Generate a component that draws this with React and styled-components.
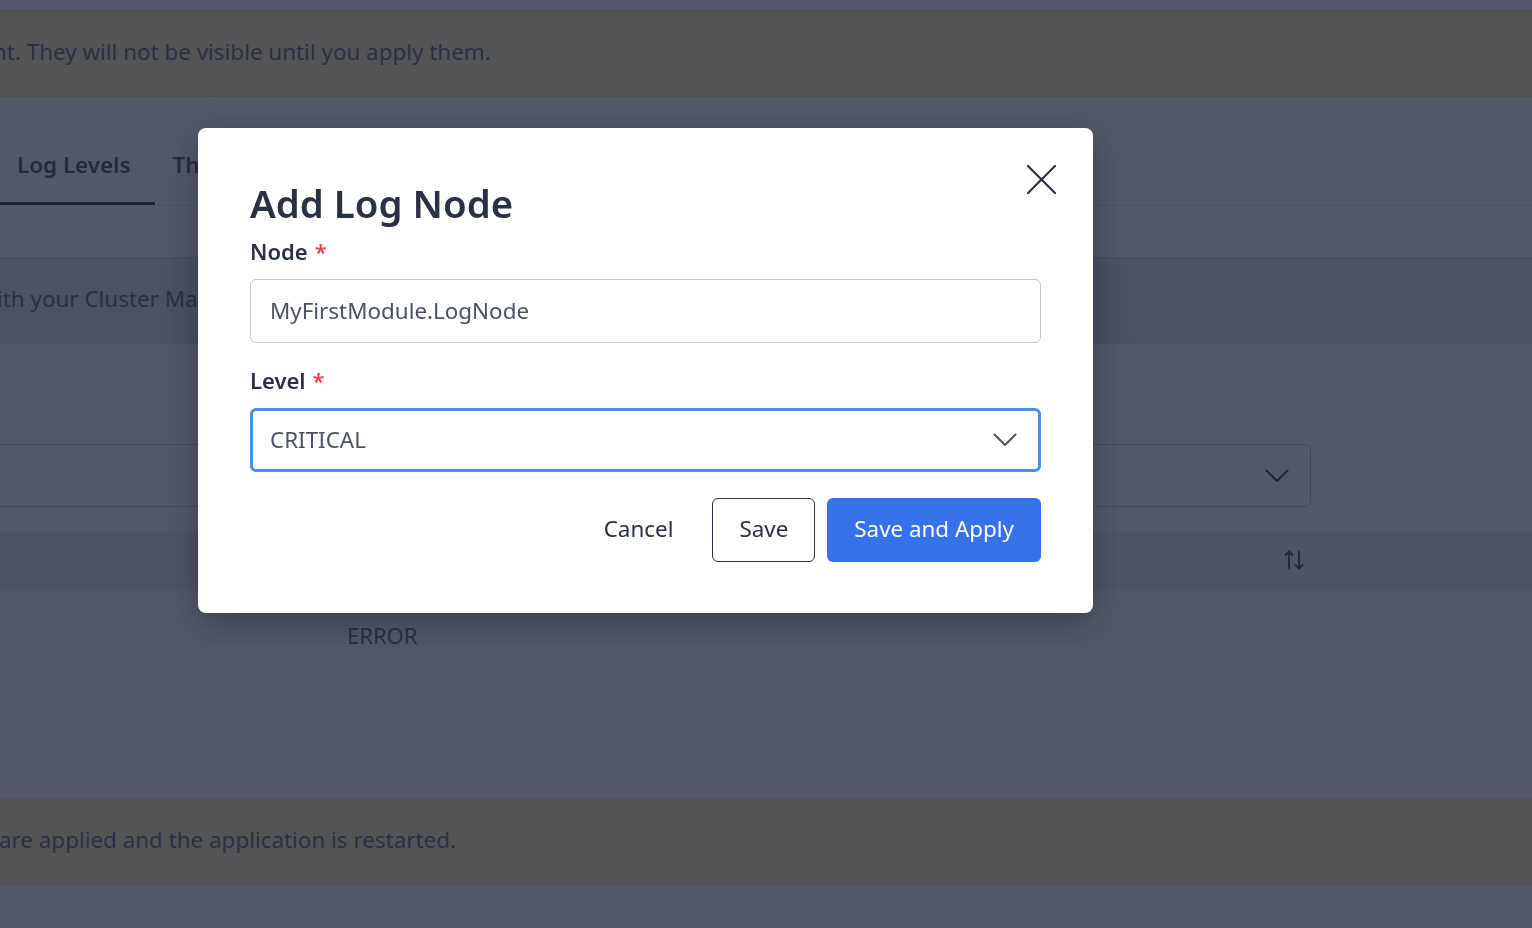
import React from 'react';
import styled, { createGlobalStyle } from 'styled-components';

const GlobalStyle = createGlobalStyle`
  html, body { margin: 0; padding: 0; background: #ffffff; overflow: hidden; }
  body { font-family: "Noto Sans", "Open Sans", sans-serif; }
  *, *::before, *::after { box-sizing: border-box; }
`;

const Page = styled.div`
  width: 1532px;
  height: 928px;
  padding-top: 10px;
  background: #ffffff;
  display: flex;
  flex-direction: column;
  overflow: hidden;
`;

const Banner = styled.div`
  flex: none;
  height: 87px;
  margin-top: ${p => p.$top || 0}px;
  padding-bottom: 5px;
  display: flex;
  align-items: center;
  background: ${p => (p.$tone === 'info' ? '#d0dfed' : '#fae8ae')};
  border-top: 1px solid ${p => (p.$tone === 'info' ? '#bccbdc' : '#ecd896')};
  border-bottom: 1px solid ${p => (p.$tone === 'info' ? '#bccbdc' : '#ecd896')};
  font-size: 22.4px;
  color: ${p => (p.$tone === 'info' ? '#3a4252' : '#40434a')};
  white-space: nowrap;
`;

const BannerText = styled.span`
  margin-left: ${p => p.$shift || 0}px;
`;

const TabBar = styled.div`
  flex: none;
  margin-top: 31px;
  display: flex;
  border-bottom: 1px solid #e0e1e6;
`;

const Tab = styled.div`
  height: 77px;
  display: flex;
  align-items: center;
  padding: 0 25px 2px 17px;
  font-size: 22.4px;
  font-weight: 600;
  color: ${p => (p.$active ? '#1e2533' : '#2a3140')};
  border-bottom: 3px solid ${p => (p.$active ? '#05091a' : 'transparent')};
  white-space: nowrap;
`;

const SelectBox = styled.div`
  flex: none;
  margin: 100px 221px 0 -20px;
  height: 63px;
  border: 1px solid #b4b6bc;
  border-radius: 6px;
  display: flex;
  align-items: center;
  justify-content: flex-end;
  padding-right: 20px;
  color: #0a0f1e;
`;

const TableHeader = styled.div`
  flex: none;
  margin-top: 25px;
  height: 59px;
  background: #e7e8ec;
  display: flex;
  align-items: center;
  justify-content: flex-end;
  padding: 0 228px 4px 0;
  color: #0a0f1e;
`;

const TableRow = styled.div`
  flex: none;
  height: 92px;
  border-bottom: 1px solid #e8e9ee;
  display: flex;
  align-items: center;
  padding: 0 0 4px 347px;
  font-size: 22px;
  color: #3e4453;
`;

const Overlay = styled.div`
  position: fixed;
  inset: 0;
  background: rgba(37, 43, 61, 0.784);
  display: flex;
  align-items: flex-start;
  padding: 128px 0 0 198px;
`;

const Modal = styled.div`
  position: relative;
  width: 895px;
  background: #ffffff;
  border-radius: 8px;
  padding: 51px 52px 51px 52px;
  box-shadow: 0 10px 36px rgba(10, 14, 26, 0.35);
  display: flex;
  flex-direction: column;
`;

const CloseButton = styled.button`
  position: absolute;
  top: 37px;
  right: 37px;
  width: 29px;
  height: 29px;
  padding: 0;
  border: none;
  background: none;
  color: #2a3142;
  display: flex;
  cursor: pointer;
`;

const Title = styled.h2`
  margin: 0;
  font-size: 38.4px;
  line-height: 48px;
  font-weight: 600;
  color: #2a3142;
`;

const Label = styled.div`
  margin-top: ${p => p.$top}px;
  font-size: 22px;
  line-height: 28px;
  font-weight: 600;
  color: #2a3142;
`;

const Required = styled.span`
  color: #e5484d;
  margin-left: 7px;
`;

const Field = styled.div`
  margin-top: 14px;
  height: 64px;
  border: ${p => (p.$focused ? '3px solid #4a8ef0' : '1px solid #c8cace')};
  border-radius: 6px;
  display: flex;
  align-items: center;
  justify-content: space-between;
  padding: 0 ${p => (p.$focused ? '21px' : '23px')} 2px ${p => (p.$focused ? '17px' : '19px')};
  font-size: 22.4px;
  color: #4b5262;
`;

const FieldChevron = styled.span`
  display: flex;
  margin-top: 2px;
`;

const Actions = styled.div`
  margin-top: 26px;
  display: flex;
  justify-content: flex-end;
  gap: 12px;
`;

const Button = styled.button`
  height: 64px;
  padding: 0 26px 3px;
  border-radius: 6px;
  font-family: inherit;
  font-size: 22.4px;
  cursor: pointer;
  border: 1px solid ${p => (p.$variant === 'outline' ? '#2a3142' : 'transparent')};
  background: ${p => (p.$variant === 'primary' ? '#3473ec' : p.$variant === 'outline' ? '#ffffff' : 'transparent')};
  color: ${p => (p.$variant === 'primary' ? '#ffffff' : '#2a3142')};
`;

const Chevron = ({ w = 24, h = 14 }) => (
  <svg width={w} height={h} viewBox="0 0 24 14" fill="none" stroke="currentColor" strokeWidth="2" strokeLinecap="round" strokeLinejoin="round">
    <polyline points="1.5,1.5 12,12 22.5,1.5" />
  </svg>
);

const SortIcon = () => (
  <svg width="20" height="20" viewBox="0 0 20 20" fill="none" stroke="currentColor" strokeWidth="1.8" strokeLinecap="round" strokeLinejoin="round">
    <line x1="5" y1="1.5" x2="5" y2="18.5" />
    <polyline points="1.5,5 5,1.5 8.5,5" />
    <line x1="15" y1="1.5" x2="15" y2="18.5" />
    <polyline points="11.5,15 15,18.5 18.5,15" />
  </svg>
);

const CloseIcon = () => (
  <svg width="29" height="29" viewBox="0 0 29 29" fill="none" stroke="currentColor" strokeWidth="2.2" strokeLinecap="round">
    <line x1="1" y1="1" x2="28" y2="28" />
    <line x1="28" y1="1" x2="1" y2="28" />
  </svg>
);

export default function App() {
  return (
    <>
      <GlobalStyle />
      <Page>
        <Banner>
          <BannerText $shift={-7}>nt. They will not be visible until you apply them.</BannerText>
        </Banner>
        <TabBar>
          <Tab $active>Log Levels</Tab>
          <Tab>Threads</Tab>
        </TabBar>
        <Banner $tone="info" $top={51}>
          <BannerText $shift={-3}>ith your Cluster Manager.</BannerText>
        </Banner>
        <SelectBox>
          <Chevron w={26} h={14} />
        </SelectBox>
        <TableHeader>
          <SortIcon />
        </TableHeader>
        <TableRow>ERROR</TableRow>
        <Banner $top={115}>
          <BannerText $shift={-1}>are applied and the application is restarted.</BannerText>
        </Banner>
      </Page>
      <Overlay>
        <Modal role="dialog" aria-labelledby="add-log-node-title">
          <CloseButton aria-label="Close">
            <CloseIcon />
          </CloseButton>
          <Title id="add-log-node-title">Add Log Node</Title>
          <Label $top={10}>
            Node<Required>*</Required>
          </Label>
          <Field>MyFirstModule.LogNode</Field>
          <Label $top={23}>
            Level<Required>*</Required>
          </Label>
          <Field $focused>
            <span>CRITICAL</span>
            <FieldChevron>
              <Chevron />
            </FieldChevron>
          </Field>
          <Actions>
            <Button>Cancel</Button>
            <Button $variant="outline">Save</Button>
            <Button $variant="primary">Save and Apply</Button>
          </Actions>
        </Modal>
      </Overlay>
    </>
  );
}
